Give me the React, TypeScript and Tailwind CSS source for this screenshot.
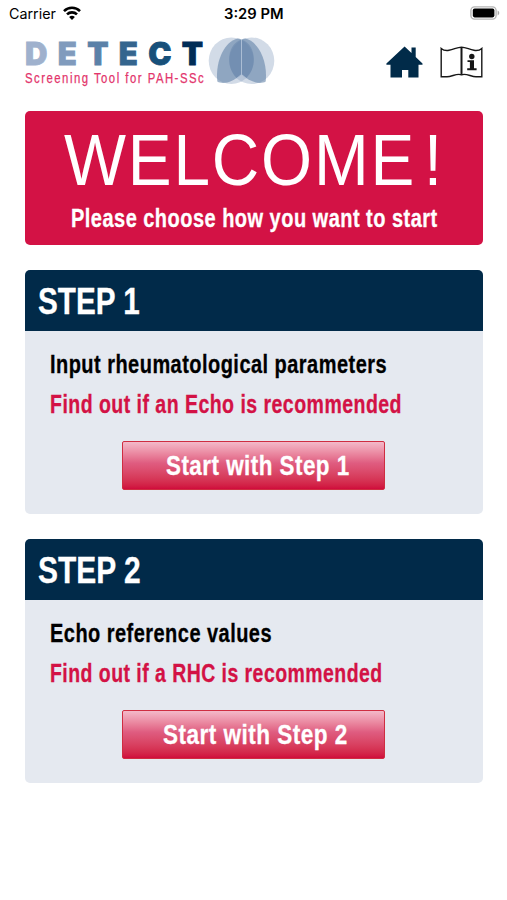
import { useLayoutEffect, useRef, useState } from "react";
import type { ReactNode } from "react";

/** Single line of text condensed horizontally to a given width. */
function Condensed({ width, className = "", children }: { width: number; className?: string; children: ReactNode }) {
  const ref = useRef<HTMLSpanElement>(null);
  const [scale, setScale] = useState(1);
  useLayoutEffect(() => {
    if (ref.current) setScale(width / ref.current.offsetWidth);
  }, [width]);
  return (
    <span className="block" style={{ width }}>
      <span
        ref={ref}
        className={`inline-block origin-left whitespace-nowrap ${className}`}
        style={{ transform: `scaleX(${scale})` }}
      >
        {children}
      </span>
    </span>
  );
}

function StatusBar() {
  return (
    <div className="grid h-7 grid-cols-3 items-center pr-[7px] pl-[9px] font-['Inter',sans-serif] text-black">
      <div className="flex items-center gap-[7px]">
        <Condensed width={47} className="text-[14px] leading-7">Carrier</Condensed>
        <svg className="-mt-[2px]" width="18" height="14" viewBox="0 0 18 14" fill="none" stroke="#000" strokeWidth="2.6">
          <path d="M1 5.1a11.4 11.4 0 0 1 16 0" />
          <path d="M4 8.4a7.2 7.2 0 0 1 10 0" />
          <path d="M9 14 6.100 11.100a4.100 4.100 0 0 1 5.800 0z" fill="#000" stroke="none" />
        </svg>
      </div>
      <div className="flex justify-center">
        <Condensed width={60} className="text-[14px] leading-7 font-semibold">3:29 PM</Condensed>
      </div>
      <div className="-mt-[2px] flex justify-end">
        <svg width="30" height="14" viewBox="0 0 30 14">
          <rect x="0.9" y="0.9" width="25.2" height="12.2" rx="3.6" fill="#fff" stroke="#b5b5b5" strokeWidth="1.4" />
          <rect x="2.8" y="2.6" width="21.6" height="8.8" rx="1.8" fill="#000" />
          <path d="M27.6 4.6c2.2.8 2.2 4 0 4.800z" fill="#a9a9a9" />
        </svg>
      </div>
    </div>
  );
}

function Logo() {
  return (
    <div className="flex">
      <div className="w-[178px] pt-[9px]">
        <div className="flex h-[29px] justify-between font-['Inter',sans-serif] text-[31px] leading-[34px] font-black [-webkit-text-stroke:0.8px_currentColor]">
          <span className="text-[#9fb1cd]">D</span>
          <span className="text-[#809bbd]">E</span>
          <span className="text-[#5b81a8]">T</span>
          <span className="text-[#34658e]">E</span>
          <span className="text-[#17507a]">C</span>
          <span className="text-[#002d57]">T</span>
        </div>
        <Condensed width={180} className="text-[14.5px] leading-4 tracking-[1.9px] text-[#e3356c] [-webkit-text-stroke:0.25px_currentColor]">
          Screening Tool for PAH-SSc
        </Condensed>
      </div>
      <svg className="mt-[9px] ml-[5px]" width="67" height="48" viewBox="0 0 67 48">
        <ellipse cx="23.3" cy="23.8" rx="22.6" ry="23.3" fill="#d2dbe7" />
        <ellipse cx="43.7" cy="23.8" rx="22.6" ry="23.3" fill="#d2dbe7" />
        <path d="M33.5 3.1a22.6 23.3 0 0 1 0 41.4a22.6 23.3 0 0 1 0-41.4z" fill="#b7c5d8" />
        <path d="M29.5 1.5C18 4 7 22 9.3 44.5C15 48 25 45 33.2 37.5V2.5Q31.5 1.3 29.5 1.5z" fill="#5e7fa5" fillOpacity="0.58" />
        <path d="M37.5 1.5C49 4 60 22 57.7 44.5C52 48 42 45 33.8 37.5V2.5Q35.5 1.3 37.5 1.5z" fill="#5e7fa5" fillOpacity="0.58" />
        <path d="M33.5 2.5C19 7 17 30 29 41Q31.5 39.5 33.5 37.5Q35.5 39.5 38 41C50 30 48 7 33.5 2.5z" fill="#5a7aa5" fillOpacity="0.4" />
        <path d="M33.5 2.5V37.5L28.5 41.5M33.5 37.5L38.5 41.5" fill="none" stroke="#b5c5da" strokeWidth="0.8" />
      </svg>
    </div>
  );
}

function HomeIcon() {
  return (
    <svg width="37" height="32" viewBox="0 0 37 32" fill="#012b49">
      <path d="M18.6 0.500 25.5 7V1.600H29.700V11L36.500 17.500V18.800H32.500V31.500H22.300V24H16V31.500H4.500V18.800H0.400V17.500z" />
    </svg>
  );
}

function ManualIcon() {
  return (
    <svg width="43" height="32" viewBox="0 0 43 32" fill="none" stroke="#171717" strokeWidth="1.4">
      <path d="M1.200 2.400C3 4 6 4.800 9 4.300C14 3.500 17 1.200 21.500 1.200C26 1.200 29 3.500 34 4.300C37 4.800 40 4 41.800 2.400V30.800H36C31 30.800 26 26.800 21.500 28.800C17 26.800 12 30.800 7 30.800H1.200z" />
      <path d="M21.5 1.2V28.800" strokeWidth="2" />
      <circle cx="31.800" cy="10.500" r="2.700" fill="#171717" stroke="none" />
      <path d="M27.500 14.200H34V22.300H36.600V24.200H27.200V22.300H29.900V16H27.500z" fill="#171717" stroke="none" />
    </svg>
  );
}

interface StepProps {
  title: string;
  titleWidth: number;
  label: string;
  labelWidth: number;
  hint: string;
  hintWidth: number;
  action: string;
  actionWidth: number;
  actionClass: string;
}

function StepCard(p: StepProps) {
  return (
    <section className="h-[244px] overflow-hidden rounded-[5px] bg-[#e5e9f0] font-bold [-webkit-text-stroke:0.3px_currentColor]">
      <h2 className="h-[61px] bg-[#012a49] pt-px pl-[13px] text-[37.5px] leading-[61px] text-white">
        <Condensed width={p.titleWidth}>{p.title}</Condensed>
      </h2>
      <div className="px-[25px] pt-[13px] tracking-[0.6px]">
        <p className="h-10 text-[25px] leading-10 text-black">
          <Condensed width={p.labelWidth}>{p.label}</Condensed>
        </p>
        <p className="h-10 text-[25px] leading-10 text-[#d31245]">
          <Condensed width={p.hintWidth}>{p.hint}</Condensed>
        </p>
      </div>
      <button
        className={`mt-[17px] ml-[97px] block h-[49px] w-[263px] rounded-[2px] border border-[#cf2d41] bg-linear-to-b from-[#f3b9c9] via-[#df5c80] via-45% to-[#d00a3c] text-left text-[28px] leading-[48px] tracking-[0.6px] text-white ${p.actionClass}`}
      >
        <Condensed width={p.actionWidth}>{p.action}</Condensed>
      </button>
    </section>
  );
}

export default function App() {
  return (
    <main className="h-[900px] w-[507px] overflow-hidden bg-white font-['Liberation_Sans',Arial,sans-serif]">
      <StatusBar />
      <header className="flex h-[83px] justify-between pr-[24px] pl-[25px]">
        <Logo />
        <div className="flex gap-[17px] pt-[18px]">
          <HomeIcon />
          <ManualIcon />
        </div>
      </header>
      <div className="flex flex-col gap-[25px] pr-6 pl-[25px]">
        <section className="h-[134px] rounded-[5px] bg-[#d31245] text-white">
          <h1 className="flex h-[84px] items-start gap-[8px] pt-[7px] pl-[39px] text-[72px] leading-[84px]">
            <Condensed width={352} className="tracking-[2px]">WELCOME</Condensed>
            <Condensed width={18}>!</Condensed>
          </h1>
          <p className="pt-[3px] pl-[46px] text-[25px] leading-10 font-bold tracking-[0.6px] [-webkit-text-stroke:0.3px_currentColor]">
            <Condensed width={367}>Please choose how you want to start</Condensed>
          </p>
        </section>
        <StepCard
          title="STEP 1" titleWidth={102}
          label="Input rheumatological parameters" labelWidth={337}
          hint="Find out if an Echo is recommended" hintWidth={352}
          action="Start with Step 1" actionWidth={184} actionClass="pl-[43px]"
        />
        <StepCard
          title="STEP 2" titleWidth={103}
          label="Echo reference values" labelWidth={222}
          hint="Find out if a RHC is recommended" hintWidth={333}
          action="Start with Step 2" actionWidth={185} actionClass="pl-[40px]"
        />
      </div>
    </main>
  );
}
